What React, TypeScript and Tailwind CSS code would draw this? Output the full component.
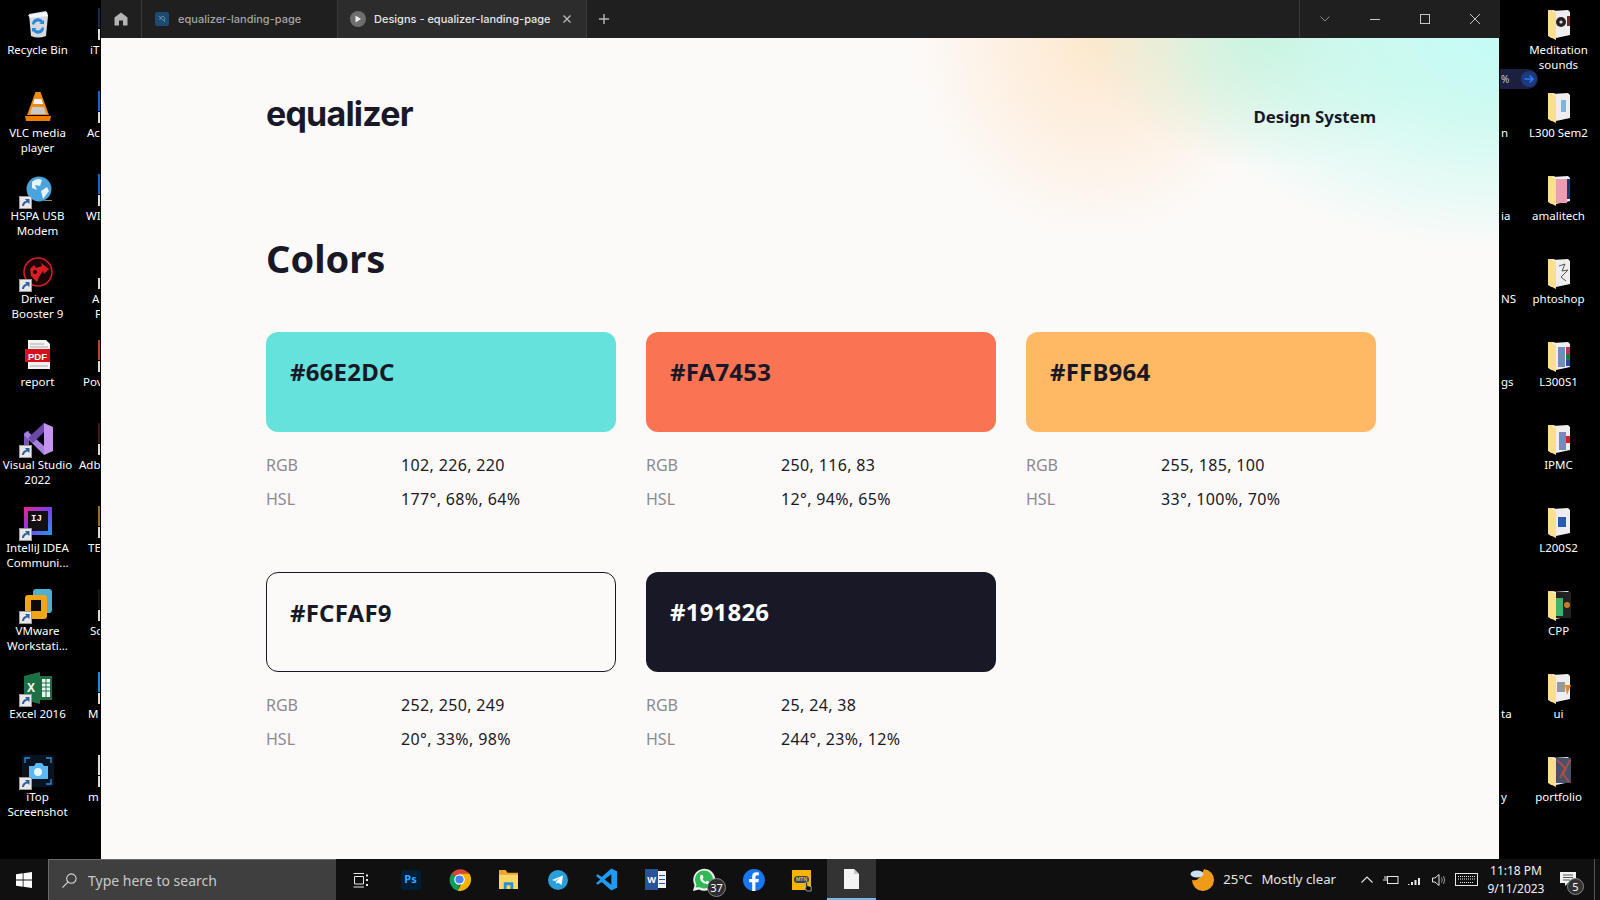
import React from "react";

const Shortcut = () => (
  <svg viewBox="0 0 13 13" className="absolute left-[-3px] bottom-[-3px] w-[13px] h-[13px]">
    <rect x="0.5" y="0.5" width="12" height="12" fill="#e8e8e8" stroke="#9a9a9a" />
    <path d="M3 10 C3 7 5 5 7.5 5 L6 3 H10.5 V8 L8.8 6.4 C6.5 6.6 5 8 5 10 Z" fill="#2e5f9e" />
  </svg>
);

const Ico = ({ children, sc }: { children: React.ReactNode; sc?: boolean }) => (
  <div className="relative w-[32px] h-[32px] mx-auto">
    <svg viewBox="0 0 32 32" className="w-[32px] h-[32px]">{children}</svg>
    {sc && <Shortcut />}
  </div>
);

const Folder = ({ children }: { children?: React.ReactNode }) => (
  <Ico>
    <path d="M5 2 H11 L13 3.5 H25 V27 L8 30 L5 27 Z" fill="#f3d27e" />
    <path d="M9 3 L25 2 L27 4 V27 L13 30 L9 28 Z" fill="#eeeeee" />
    {children}
    <path d="M5 2 L13 5 V32 L5 28 Z" fill="#fbdf8c" />
  </Ico>
);

const left1: { l: React.ReactNode; i: React.ReactNode }[] = [
  {
    l: <>Recycle Bin</>,
    i: (
      <Ico>
        <path d="M7 6 L24 3 L26 8 L24 28 Q16 31 9 28 Z" fill="#d5dadd" />
        <path d="M6 7 L25 4 L26 8 L8 10 Z" fill="#f4f6f7" />
        <path d="M12 17 a4 4 0 0 1 7 -2 l-2 1 h5 v-4 l-1 1 a6 6 0 0 0 -11 3 Z M20 19 a4 4 0 0 1 -7 2 l2 -1 h-5 v4 l1 -1 a6 6 0 0 0 11 -3 Z" fill="#2b87d8" />
      </Ico>
    ),
  },
  {
    l: <>VLC media<br />player</>,
    i: (
      <Ico>
        <path d="M13.5 1 H18.5 L27 24 H5 Z" fill="#f08a10" />
        <path d="M12.5 8 H19.5 L21 13 H11 Z" fill="#f4f4f4" />
        <path d="M10 16 H22 L24 23 H8 Z" fill="#c9c9c9" />
        <path d="M3 25 H29 L28 30 H4 Z" fill="#ef7d00" />
      </Ico>
    ),
  },
  {
    l: <>HSPA USB<br />Modem</>,
    i: (
      <Ico sc>
        <circle cx="17" cy="15" r="12.5" fill="#4ba3dc" />
        <path d="M10 8 Q15 3 20 6 L18 12 L13 11 L15 16 L10 14 Z M19 17 L25 13 L27 17 L21 25 Z" fill="#e8f4fb" />
        <rect x="22" y="26" width="8" height="1" fill="#888" />
      </Ico>
    ),
  },
  {
    l: <>Driver<br />Booster 9</>,
    i: (
      <Ico sc>
        <circle cx="16" cy="15" r="14" fill="#160606" stroke="#d81e24" strokeWidth="1.5" />
        <path d="M8 12 L12 8 L14 11 L20 9 L19 6 L27 12 L22 17 L21 14 L17 20 L15 25 L9 19 Z" fill="#d81e24" />
        <circle cx="13" cy="15" r="2" fill="#160606" />
      </Ico>
    ),
  },
  {
    l: <>report</>,
    i: (
      <Ico>
        <path d="M6 0 H24 L28 4 V29 H6 Z" fill="#f3f3f3" />
        <path d="M8 4 H22 M8 7 H26 M8 26 H26" stroke="#aaa" strokeWidth="1" />
        <rect x="3" y="9" width="25" height="13" fill="#d5121b" />
        <text x="15.5" y="19.5" textAnchor="middle" fontSize="9.5" fontWeight="700" fill="#fff" fontFamily="Liberation Sans, sans-serif">PDF</text>
      </Ico>
    ),
  },
  {
    l: <>Visual Studio<br />2022</>,
    i: (
      <Ico sc>
        <path d="M2 10 L7 8 V24 L2 22 Z" fill="#7a55b8" />
        <path d="M5 8 L22 23 V32 L2 12 Z" fill="#a97fe2" />
        <path d="M22 0 L6 15 L11 20 L22 9 Z" fill="#6a4aa6" />
        <path d="M22 0 L31 4 V28 L22 32 Z" fill="#c594ef" />
      </Ico>
    ),
  },
  {
    l: <>IntelliJ IDEA<br />Communi...</>,
    i: (
      <Ico sc>
        <defs>
          <linearGradient id="ij" x1="0" y1="0" x2="1" y2="1">
            <stop offset="0" stopColor="#f0248c" />
            <stop offset="0.5" stopColor="#7a3df0" />
            <stop offset="1" stopColor="#1da1f2" />
          </linearGradient>
        </defs>
        <rect x="2" y="1" width="28" height="28" fill="url(#ij)" />
        <rect x="6" y="5" width="20" height="20" fill="#111" />
        <text x="9" y="15" fontSize="9" fontWeight="700" fill="#fff" fontFamily="Liberation Mono, monospace">IJ</text>
      </Ico>
    ),
  },
  {
    l: <>VMware<br />Workstati...</>,
    i: (
      <Ico sc>
        <rect x="11" y="0" width="19" height="24" rx="3" fill="#4fb0cf" />
        <rect x="3" y="6" width="22" height="24" rx="3" fill="#f2a516" />
        <rect x="9" y="11" width="10" height="11" fill="#0b0b0b" />
      </Ico>
    ),
  },
  {
    l: <>Excel 2016</>,
    i: (
      <Ico sc>
        <path d="M2 4 L18 0 V32 L2 28 Z" fill="#1d7044" />
        <rect x="18" y="4" width="12" height="24" fill="#1d7044" />
        <path d="M20 7 H28 V25 H20 Z" fill="#f0f5f1" />
        <path d="M20 11 H28 M20 15 H28 M20 19 H28 M24 7 V25" stroke="#1d7044" />
        <text x="5" y="20" fontSize="12" fontWeight="700" fill="#fff" fontFamily="Liberation Sans, sans-serif">X</text>
      </Ico>
    ),
  },
  {
    l: <>iTop<br />Screenshot</>,
    i: (
      <Ico sc>
        <rect x="0" y="0" width="32" height="32" rx="4" fill="#0a1420" />
        <path d="M3 8 V3 H8 M24 3 H29 V8 M29 24 V29 H24" stroke="#2b8fe8" strokeWidth="1.3" fill="none" />
        <path d="M7 11 H12 L14 8 H20 L22 11 H26 V24 H7 Z" fill="#5bb8f8" />
        <circle cx="16" cy="17" r="4" fill="#e8f6ff" />
      </Ico>
    ),
  },
];

const left2: { t: React.ReactNode; c: string; cls: string }[] = [
  { t: <>iT</>, c: "bg-[#1e2a50]", cls: "ml-[14px]" },
  { t: <>Ac</>, c: "bg-[#1468c8]", cls: "ml-[11px]" },
  { t: <>WI</>, c: "bg-[#1468c8]", cls: "ml-[10px]" },
  { t: <>A<br /><span className="ml-[3px]">F</span></>, c: "bg-black", cls: "ml-[16px]" },
  { t: <>Pov</>, c: "bg-[#b7472a]", cls: "ml-[7px]" },
  { t: <>Adb</>, c: "bg-[#4a1410]", cls: "ml-[3px]" },
  { t: <>TE</>, c: "bg-[#9a7020]", cls: "ml-[12px]" },
  { t: <>Sc</>, c: "bg-[#161616]", cls: "ml-[14px]" },
  { t: <>M</>, c: "bg-[#1a8fd8]", cls: "ml-[12px]" },
  { t: <>m</>, c: "bg-[#dddddd]", cls: "ml-[12px]" },
];

const right: { l: React.ReactNode; i: React.ReactNode }[] = [
  {
    l: <>Meditation<br />sounds</>,
    i: (
      <Folder>
        <circle cx="18" cy="14" r="5" fill="#222" />
        <circle cx="18" cy="14" r="1.6" fill="#ddd" />
        <rect x="24" y="8" width="3" height="10" fill="#6a2a2a" />
      </Folder>
    ),
  },
  { l: <>L300 Sem2</>, i: <Folder><rect x="18" y="9" width="5" height="12" fill="#79b8d8" /></Folder> },
  {
    l: <>amalitech</>,
    i: (
      <Folder>
        <rect x="13" y="5" width="11" height="24" fill="#ee9cb0" />
        <rect x="24" y="5" width="3" height="20" fill="#123a78" />
      </Folder>
    ),
  },
  { l: <>phtoshop</>, i: <Folder><path d="M16 9 L22 7 L19 14 L25 13 L18 20 L23 24" stroke="#555" fill="none" /></Folder> },
  {
    l: <>L300S1</>,
    i: (
      <Folder>
        <rect x="15" y="7" width="7" height="20" fill="#6f8fb8" />
        <rect x="23" y="7" width="4" height="7" fill="#c0305a" />
        <rect x="23" y="14" width="4" height="6" fill="#1a7a3c" />
        <rect x="23" y="20" width="4" height="6" fill="#2848b0" />
      </Folder>
    ),
  },
  { l: <>IPMC</>, i: <Folder><rect x="16" y="9" width="7" height="18" fill="#6f8fb8" /><rect x="23" y="13" width="4" height="7" fill="#d81e24" /></Folder> },
  { l: <>L200S2</>, i: <Folder><rect x="15" y="11" width="8" height="10" fill="#2a5caa" /></Folder> },
  {
    l: <>CPP</>,
    i: (
      <Folder>
        <rect x="13" y="3" width="15" height="26" fill="#222" />
        <rect x="13" y="9" width="7" height="18" fill="#3fb070" />
        <circle cx="24" cy="16" r="3" fill="#c87a28" />
      </Folder>
    ),
  },
  { l: <>ui</>, i: <Folder><rect x="14" y="10" width="8" height="10" fill="#999" /><path d="M22 13 H28 L24 23 Z" fill="#e88a20" /></Folder> },
  {
    l: <>portfolio</>,
    i: (
      <Folder>
        <rect x="13" y="3" width="15" height="25" fill="#48506a" />
        <path d="M14 5 L22 13 L17 23 M27 5 L20 19 L26 27" stroke="#a85040" strokeWidth="2" fill="none" />
      </Folder>
    ),
  },
];

const rightCut = ["", "n", "ia", "NS", "gs", "", "", "", "ta", "y"];

const Label = ({ children }: { children: React.ReactNode }) => (
  <div className="mt-[2px] text-center text-white text-[11.5px] leading-[15px] font-['Noto_Sans',sans-serif]">{children}</div>
);

const colors = [
  { hex: "#66E2DC", rgb: "102, 226, 220", hsl: "177°, 68%, 64%", cls: "bg-[#66e2dc] pl-[24px]" },
  { hex: "#FA7453", rgb: "250, 116, 83", hsl: "12°, 94%, 65%", cls: "bg-[#fa7453] pl-[24px]" },
  { hex: "#FFB964", rgb: "255, 185, 100", hsl: "33°, 100%, 70%", cls: "bg-[#ffb964] pl-[24px]" },
  { hex: "#FCFAF9", rgb: "252, 250, 249", hsl: "20°, 33%, 98%", cls: "bg-[#fcfaf9] border border-[#191826] pl-[23px]" },
  { hex: "#191826", rgb: "25, 24, 38", hsl: "244°, 23%, 12%", cls: "bg-[#191826] text-white pl-[24px]" },
];

const TaskSlot = ({ children, cls = "" }: { children: React.ReactNode; cls?: string }) => (
  <div className={"relative w-[49px] h-full flex items-center justify-center shrink-0 " + cls}>{children}</div>
);

export default function App() {
  return (
    <div className="w-[1600px] h-[900px] bg-black flex flex-col overflow-hidden font-['Noto_Sans',sans-serif]">
      <div className="flex h-[859px]">
        {/* left desktop icons */}
        <div className="w-[100px] shrink-0 flex overflow-hidden">
          <div className="w-[75px] shrink-0">
            {left1.map((d, i) => (
              <div key={i} className="h-[83px] pt-[8px]">
                {d.i}
                <Label>{d.l}</Label>
              </div>
            ))}
          </div>
          <div className="w-[100px] shrink-0 ml-[1px]">
            {left2.map((d, i) => (
              <div key={i} className="h-[83px] pt-[8px]">
                <div className="h-[32px] flex flex-col ml-[22px] w-[2px]">
                  <div className={"h-[20px] " + d.c} />
                  <div className="flex-1 mt-[1px] bg-[#dcdcdc]" />
                </div>
                <div className={"mt-[2px] text-white text-[11.5px] leading-[15px] whitespace-nowrap " + d.cls}>{d.t}</div>
              </div>
            ))}
          </div>
        </div>

        {/* window */}
        <div className="w-[1399px] shrink-0 flex flex-col ml-[1px]">
          <div className="h-[38px] bg-[#1f1f1f] flex items-stretch text-[11px] font-['Inter',sans-serif] font-medium shrink-0">
            <div className="w-[41px] flex items-center justify-center border-r border-[#3a3a3a]">
              <svg viewBox="0 0 14 14" className="w-[14px] h-[14px]">
                <path d="M7 0.5 L13.5 5.5 V13.5 H9 V8.5 H5 V13.5 H0.5 V5.5 Z" fill="#b4b4b4" />
              </svg>
            </div>
            <div className="w-[195px] flex items-center pl-[13px] gap-[9px] text-[#a5a5a5]">
              <div className="w-[14px] h-[14px] rounded-[2px] bg-[#1d4a70] flex items-center justify-center">
                <svg viewBox="0 0 10 10" className="w-[10px] h-[10px]"><path d="M2 2 L8 8 M3 6 Q2 3 6 2 Q9 4 7 7" stroke="#6a8aa0" fill="none" /></svg>
              </div>
              <span>equalizer-landing-page</span>
            </div>
            <div className="w-[250px] bg-[#2c2c2c] border-x border-[#3a3a3a] flex items-center pl-[12px] text-[#e6e6e6]">
              <div className="w-[16px] h-[16px] shrink-0 rounded-full bg-[#6e6e6e] flex items-center justify-center">
                <svg viewBox="0 0 8 8" className="w-[8px] h-[8px]"><path d="M1.5 0.5 L7 4 L1.5 7.5 Z" fill="#f0f0f0" /></svg>
              </div>
              <span className="ml-[8px] whitespace-nowrap">Designs - equalizer-landing-page</span>
              <svg viewBox="0 0 10 10" className="w-[10px] h-[10px] ml-[11px] shrink-0"><path d="M1.5 1.5 L8.5 8.5 M8.5 1.5 L1.5 8.5" stroke="#b8b8b8" strokeWidth="1.4" /></svg>
            </div>
            <div className="w-[33px] flex items-center justify-center">
              <svg viewBox="0 0 10 10" className="w-[10px] h-[10px]"><path d="M5 0 V10 M0 5 H10" stroke="#b8b8b8" strokeWidth="1.4" /></svg>
            </div>
            <div className="flex-1" />
            <div className="w-[201px] flex border-l border-[#3a3a3a] items-stretch">
              <div className="w-[50px] flex items-center justify-center">
                <svg viewBox="0 0 10 6" className="w-[10px] h-[6px]"><path d="M0.5 0.5 L5 5 L9.5 0.5" stroke="#8a8a8a" fill="none" /></svg>
              </div>
              <div className="w-[50px] flex items-center justify-center">
                <svg viewBox="0 0 10 1" className="w-[10px] h-[1px]"><path d="M0 0.5 H10" stroke="#c8c8c8" /></svg>
              </div>
              <div className="w-[50px] flex items-center justify-center">
                <svg viewBox="0 0 10 10" className="w-[10px] h-[10px]"><rect x="0.5" y="0.5" width="9" height="9" stroke="#c8c8c8" fill="none" /></svg>
              </div>
              <div className="w-[50px] flex items-center justify-center">
                <svg viewBox="0 0 10 10" className="w-[10px] h-[10px]"><path d="M0 0 L10 10 M10 0 L0 10" stroke="#c8c8c8" /></svg>
              </div>
            </div>
          </div>

          <div className="relative flex-1 mr-[1px] bg-[#fcfaf9] text-[#191826] overflow-hidden">
            <div className="absolute top-0 right-0 w-[600px] h-[280px] bg-[radial-gradient(ellipse_340px_215px_at_100%_0%,rgba(196,251,245,1)_0%,rgba(198,250,240,0.85)_35%,rgba(198,250,240,0)_100%),radial-gradient(ellipse_190px_130px_at_62%_0%,rgba(200,238,212,0.9)_0%,rgba(200,238,212,0)_100%),radial-gradient(ellipse_185px_205px_at_33%_0%,rgba(254,232,205,1)_0%,rgba(254,234,212,0.65)_45%,rgba(252,250,249,0)_100%)]" />
            <div className="relative w-[1110px] ml-[165px]">
              <div className="flex justify-between items-center pt-[51px] h-[100px]">
                <span className="text-[34px] leading-[46px] font-bold tracking-[-0.8px] font-['Inter',sans-serif]">equalizer</span>
                <span className="text-[16.8px] font-bold mt-[6px]">Design System</span>
              </div>
              <h1 className="text-[38px] leading-[52px] font-bold mt-[94px]">Colors</h1>
              <div className="grid grid-cols-3 gap-x-[30px] gap-y-[56px] mt-[48px]">
                {colors.map((c) => (
                  <div key={c.hex}>
                    <div className={"h-[100px] rounded-[12px] pt-[24px] text-[24px] leading-[32px] font-bold tracking-[0.2px] " + c.cls}>{c.hex}</div>
                    <div className="mt-[16px] grid grid-cols-[135px_1fr] text-[16px] leading-[34px]">
                      <span className="text-[#8b8a92]">RGB</span>
                      <span className="tracking-[0.35px]">{c.rgb}</span>
                      <span className="text-[#8b8a92]">HSL</span>
                      <span className="tracking-[0.35px]">{c.hsl}</span>
                    </div>
                  </div>
                ))}
              </div>
            </div>
          </div>
        </div>

        {/* right desktop icons */}
        <div className="relative flex-1 flex">
          <div className="absolute left-0 top-[69px] w-[38px] h-[20px] rounded-r-full bg-[#1b2040] flex items-center text-[#c8c8d0] text-[10px] pl-[1px]">
            <span>%</span>
            <span className="ml-auto mr-[1px] w-[16px] h-[16px] rounded-full bg-[#1d3a80] flex items-center justify-center">
              <svg viewBox="0 0 10 10" className="w-[10px] h-[10px]"><path d="M0.5 5 H9 M5.5 1.5 L9 5 L5.5 8.5" stroke="#2b7bf0" strokeWidth="1.6" fill="none" /></svg>
            </span>
          </div>
          <div className="w-[21px] shrink-0">
            {rightCut.map((t, i) => (
              <div key={i} className="h-[83px] pt-[42px] text-white text-[11.5px] leading-[15px] pl-[1px]">{t}</div>
            ))}
          </div>
          <div className="w-[75px] shrink-0">
            {right.map((d, i) => (
              <div key={i} className="h-[83px] pt-[8px]">
                {d.i}
                <Label>{d.l}</Label>
              </div>
            ))}
          </div>
        </div>
      </div>

      {/* taskbar */}
      <div className="h-[41px] bg-[#101010] flex items-center text-white">
        <div className="w-[48px] h-full flex items-center justify-center shrink-0">
          <svg viewBox="0 0 16 16" className="w-[16px] h-[16px]">
            <path d="M0 2.3 L6.7 1.3 V7.6 H0 Z M7.5 1.2 L16 0 V7.6 H7.5 Z M0 8.4 H6.7 V14.7 L0 13.7 Z M7.5 8.4 H16 V16 L7.5 14.8 Z" fill="#fff" />
          </svg>
        </div>
        <div className="w-[288px] h-full bg-[#3f3f3f] border-l border-t border-[#6a6a6a] flex items-center pl-[12px] text-[14px] text-[#c9c9c9] shrink-0">
          <svg viewBox="0 0 18 18" className="w-[17px] h-[17px]">
            <circle cx="11" cy="7" r="5" stroke="#dcdcdc" strokeWidth="1.1" fill="none" />
            <path d="M7.5 10.5 L1.5 16.5" stroke="#dcdcdc" strokeWidth="1.1" />
          </svg>
          <span className="ml-[10px]">Type here to search</span>
        </div>
        <TaskSlot>
          <svg viewBox="0 0 16 16" className="w-[16px] h-[16px]">
            <path d="M0.5 1.5 H11 M0.5 15 H11 M1.5 4.5 H10.5 V12 H1.5 Z" stroke="#e8e8e8" fill="none" />
            <path d="M13 2.5 h2 v2 h-2 Z M13 7 h2 v2 h-2 Z M13 12 h2 v2 h-2 Z" fill="#e8e8e8" />
          </svg>
        </TaskSlot>
        <TaskSlot cls="ml-[1px]">
          <div className="w-[20px] h-[20px] rounded-[3px] bg-[#001e36] flex items-center justify-center text-[#31a8ff] text-[11px] font-bold">Ps</div>
        </TaskSlot>
        <TaskSlot>
          <svg viewBox="0 0 24 24" className="w-[23px] h-[23px]">
            <path d="M12 12 L3.5 6 A12 12 0 0 1 22.4 6 Z" fill="#db4437" />
            <path d="M3.5 6 A12 12 0 0 0 10 23.8 L14 13 Z" fill="#0f9d58" />
            <path d="M22.4 6 A12 12 0 0 1 10 23.8 L15 14 L12 6 Z" fill="#f4b400" />
            <circle cx="12" cy="12" r="5.5" fill="#fff" />
            <circle cx="12" cy="12" r="4.3" fill="#4285f4" />
          </svg>
        </TaskSlot>
        <TaskSlot>
          <svg viewBox="0 0 22 20" className="w-[21px] h-[19px]">
            <path d="M1 0 H8 L10 3 H21 V20 H1 Z" fill="#e8a827" />
            <rect x="1" y="5" width="20" height="15" fill="#fbd765" />
            <path d="M6 20 V13 H16 V20 H13 V16 H9 V20 Z" fill="#2b8fd8" />
          </svg>
        </TaskSlot>
        <TaskSlot>
          <svg viewBox="0 0 20 20" className="w-[20px] h-[20px]">
            <circle cx="10" cy="10" r="10" fill="#2a9ed8" />
            <path d="M4 10 L15 5.5 L13.5 15 L10 12.5 L8.5 14 L8 11.5 L12.5 7.5 L7 11 Z" fill="#fff" />
          </svg>
        </TaskSlot>
        <TaskSlot>
          <svg viewBox="0 0 24 24" className="w-[23px] h-[23px]">
            <path d="M17 0.5 L23 3.5 V20.5 L17 23.5 L7 14.5 L3 17.5 L1 16 L5.5 12 L1 8 L3 6.5 L7 9.5 Z" fill="#1f9cf0" />
            <path d="M17 6.5 V17.5 L10 12 Z" fill="#101010" />
          </svg>
        </TaskSlot>
        <TaskSlot>
          <div className="relative w-[21px] h-[21px] flex">
            <div className="w-[13px] h-full bg-[#2a5299] text-[9px] font-bold flex items-center justify-center z-10">W</div>
            <div className="flex-1 my-[2px] bg-[#f2f2f2] flex flex-col justify-around py-[2px] px-[1px]">
              <div className="h-[1px] bg-[#2a5299]" /><div className="h-[1px] bg-[#2a5299]" /><div className="h-[1px] bg-[#2a5299]" />
            </div>
          </div>
        </TaskSlot>
        <TaskSlot>
          <svg viewBox="0 0 24 24" className="w-[24px] h-[24px] -translate-x-[1px]">
            <path d="M1 23 L2.6 17 A11 11 0 1 1 7 21.4 Z" fill="#f2f2f2" />
            <path d="M3.5 19.5 L4.5 16.5 A9 9 0 1 1 7.5 19.3 Z" fill="#2fba55" />
            <path d="M8.5 7 L10.5 6.8 L11.5 9.5 L10.5 11 Q11.5 13 13.5 14 L15 12.7 L17.5 14 L17 16 Q12.5 17 9 13 Q7 10 8.5 7 Z" fill="#fff" />
          </svg>
          <div className="absolute left-[27px] top-[19px] w-[19px] h-[19px] rounded-full bg-[#2e2e2e] border border-[#888] text-[11px] leading-[17px] text-center">37</div>
        </TaskSlot>
        <TaskSlot>
          <svg viewBox="0 0 24 24" className="w-[22px] h-[22px]">
            <circle cx="12" cy="12" r="12" fill="#1877f2" />
            <path d="M13.5 24 V14.5 H16.8 L17.3 11 H13.5 V8.7 Q13.5 6.9 15.3 6.9 H17.4 V3.8 Q15.8 3.6 14.6 3.6 Q10 3.6 10 8.3 V11 H6.7 V14.5 H10 V24 Z" fill="#fff" />
          </svg>
        </TaskSlot>
        <TaskSlot>
          <div className="relative w-[19px] h-[20px] bg-[#f7b500] -translate-x-[1px] flex items-center justify-center">
            <div className="w-[15px] h-[7px] rounded-full bg-[#1d4a78] text-[5px] leading-[7px] font-bold text-center text-[#f7b500]">MTN</div>
            <svg viewBox="0 0 10 13" className="absolute left-[12px] top-[11px] w-[9px] h-[12px]">
              <path d="M2 1 L4 1 L4 5 L8 6 L8 11 L3 11 L0.5 7 L2 7 Z" fill="#111" stroke="#ddd" strokeWidth="0.7" />
            </svg>
          </div>
        </TaskSlot>
        <TaskSlot cls="bg-[#333333] border-b-[2px] border-[#76b9ed]">
          <svg viewBox="0 0 15 20" className="w-[15px] h-[20px]">
            <path d="M0 0 H10 L15 5 V20 H0 Z" fill="#f4f4f4" />
            <path d="M10 0 L15 5 H10 Z" fill="#c8c8c8" />
          </svg>
        </TaskSlot>
        <div className="flex-1" />
        <svg viewBox="0 0 24 24" className="w-[24px] h-[24px] shrink-0">
          <path d="M14 1 A11 11 0 1 1 2 12 Q10 14 14 1 Z" fill="#f09a1a" />
          <ellipse cx="7" cy="6" rx="6.5" ry="3.5" fill="#cfe0f0" />
        </svg>
        <span className="ml-[9px] text-[13.2px] text-[#e6e6e6]">25°C</span>
        <span className="ml-[9px] text-[13.2px] text-[#e6e6e6]">Mostly clear</span>
        <svg viewBox="0 0 12 7" className="w-[12px] h-[7px] ml-[25px] shrink-0"><path d="M0.5 6.5 L6 1 L11.5 6.5" stroke="#e8e8e8" fill="none" strokeWidth="1.1" /></svg>
        <svg viewBox="0 0 16 10" className="w-[16px] h-[10px] ml-[10px] shrink-0">
          <rect x="4.5" y="1.5" width="10.5" height="7" stroke="#e8e8e8" fill="none" />
          <path d="M0 5 H5 M2 1 V4 M4 1 V4" stroke="#e8e8e8" />
        </svg>
        <svg viewBox="0 0 14 10" className="w-[14px] h-[10px] ml-[9px] shrink-0">
          <path d="M0 9 h1.5 v1 h-1.5 Z M3 7 h2 v3 h-2 Z M6.5 5 h2 v5 h-2 Z M10 3 h2 v7 h-2 Z" fill="#e8e8e8" />
        </svg>
        <svg viewBox="0 0 16 14" className="w-[16px] h-[14px] ml-[10px] shrink-0">
          <path d="M0.5 5 H3 L7 1.5 V12.5 L3 9 H0.5 Z" stroke="#e8e8e8" fill="none" />
          <path d="M9.5 4.5 Q11 7 9.5 9.5 M11.5 3 Q14 7 11.5 11" stroke="#999" fill="none" />
        </svg>
        <svg viewBox="0 0 23 13" className="w-[23px] h-[13px] ml-[7px] shrink-0">
          <rect x="0.5" y="0.5" width="22" height="12" stroke="#e8e8e8" fill="none" />
          <path d="M3 3.5 H20 M3 6 H20 M5 9.5 H18" stroke="#e8e8e8" strokeDasharray="1 1" />
        </svg>
        <div className="w-[76px] text-center text-[12px] leading-[18px] text-[#f0f0f0] shrink-0">
          <div>11:18 PM</div>
          <div>9/11/2023</div>
        </div>
        <div className="relative w-[26px] h-[28px] ml-[5px] shrink-0">
          <svg viewBox="0 0 16 16" className="absolute left-[1px] top-[6px] w-[16px] h-[16px]">
            <path d="M0 0 H16 V11 H8 L5 14 V11 H0 Z" fill="#f2f2f2" />
            <path d="M3 3 H13 M3 5.5 H13 M3 8 H10" stroke="#555" />
          </svg>
          <div className="absolute left-[8px] top-[12px] w-[17px] h-[17px] rounded-full bg-[#333] border border-[#888] text-[11px] leading-[15px] text-center">5</div>
        </div>
        <div className="w-[1px] h-full bg-[#555] ml-[9px]" />
        <div className="w-[5px]" />
      </div>
    </div>
  );
}
